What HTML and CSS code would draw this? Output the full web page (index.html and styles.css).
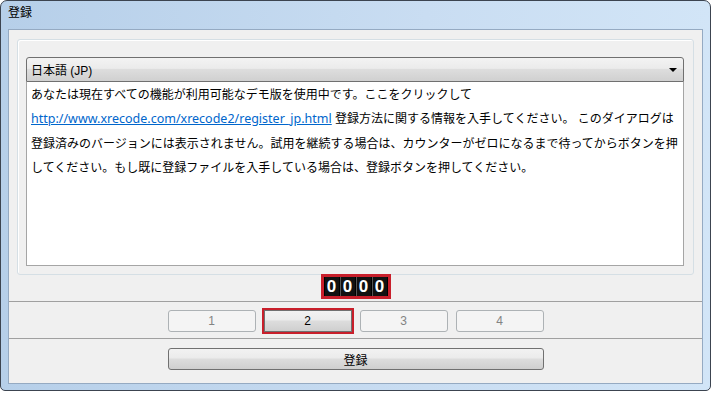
FILE: index.html
```html
<!DOCTYPE html>
<html lang="ja">
<head>
  <meta charset="UTF-8">
  <title>登録</title>
  <link rel="stylesheet" href="styles.css">
</head>
<body>
  <div class="window">
    <div class="titlebar">登録</div>
    <div class="client">
      <!-- 言語とメッセージ -->
      <div class="group">
        <div class="combo">
          <span>日本語 (JP)</span>
          <span class="arrow"></span>
        </div>
        <div class="memo">
          あなたは現在すべての機能が利用可能なデモ版を使用中です。ここをクリックして<br>
          <a href="#">http://www.xrecode.com/xrecode2/register_jp.html</a> 登録方法に関する情報を入手してください。 このダイアログは<br>
          登録済みのバージョンには表示されません。試用を継続する場合は、カウンターがゼロになるまで待ってからボタンを押<br>
          してください。もし既に登録ファイルを入手している場合は、登録ボタンを押してください。
        </div>
      </div>

      <!-- カウンター -->
      <div class="counter-row">
        <div class="counter">
          <span class="digit">0</span>
          <span class="digit">0</span>
          <span class="digit">0</span>
          <span class="digit">0</span>
        </div>
      </div>

      <div class="button-row">
        <button class="btn" disabled>1</button>
        <button class="btn marked">2</button>
        <button class="btn" disabled>3</button>
        <button class="btn" disabled>4</button>
      </div>

      <div class="register-row">
        <button class="btn wide">登録</button>
      </div>
    </div>
  </div>
</body>
</html>
```

FILE: styles.css
```css
body {
  margin: 0;
  background: #ffffff;
  font-family: "Liberation Sans", "Noto Sans CJK JP", sans-serif;
  font-size: 12px;
  color: #000;
}
.window {
  box-sizing: border-box;
  width: 711px;
  height: 391px;
  border: 1px solid #3c4450;
  border-radius: 7px 7px 5px 5px;
  background: linear-gradient(to right, #b6cfe9, #c9ddf2 60%, #d2e5f7);
  padding: 0 7px 6px 7px;
  display: flex;
  flex-direction: column;
}
.titlebar {
  height: 28px;
  line-height: 25px;
  flex-shrink: 0;
}
.client {
  flex: 1;
  background: #f0f0f0;
  border: 1px solid #95aac2;
  display: flex;
  flex-direction: column;
}
.group {
  margin: 9px 8px 0 8px;
  height: 236px;
  box-sizing: border-box;
  border: 1px solid #d5dfe5;
  border-radius: 3px;
  box-shadow: inset 1px 1px 0 #fff;
  padding: 17px 9px 8px 8px;
  display: flex;
  flex-direction: column;
}
.combo {
  height: 25px;
  box-sizing: border-box;
  border: 1px solid #707070;
  border-radius: 3px 3px 0 0;
  background: linear-gradient(#f3f3f3, #ebebeb 45%, #dddddd 50%, #d0d0d0);
  display: flex;
  align-items: center;
  justify-content: space-between;
  padding: 0 6px 0 4px;
}
.arrow {
  width: 0;
  height: 0;
  border-left: 4px solid transparent;
  border-right: 4px solid transparent;
  border-top: 4px solid #000;
}
.memo {
  flex: 1;
  background: #fff;
  border: 1px solid #a5a5a5;
  border-top: none;
  padding: 1px 4px 0 4px;
  line-height: 24.3px;
}
.memo a {
  color: #0066cc;
  font-family: "Noto Sans", sans-serif;
  font-size: 12.5px;
}
.counter-row {
  height: 27px;
  margin-top: -1px;
  display: flex;
  justify-content: center;
  border-bottom: 1px solid #a0a0a0;
}
.counter {
  height: 25px;
  box-sizing: border-box;
  border: 3px solid #c81f2b;
  background: #000;
  display: flex;
  gap: 1px;
  padding: 0 1px;
}
.digit {
  width: 14px;
  background: #111;
  border-left: 1px solid #555;
  color: #fff;
  font-weight: bold;
  font-size: 17px;
  line-height: 19px;
  text-align: center;
}
.digit:first-child {
  border-left: none;
}
.button-row {
  height: 37px;
  box-sizing: border-box;
  padding-top: 8px;
  display: flex;
  justify-content: center;
  gap: 8px;
  border-bottom: 1px solid #a0a0a0;
}
.register-row {
  padding-top: 9px;
  display: flex;
  justify-content: center;
}
.btn {
  width: 88px;
  height: 22px;
  box-sizing: border-box;
  border: 1px solid #707070;
  border-radius: 3px;
  background: linear-gradient(#f2f2f2, #ebebeb 45%, #dddddd 50%, #cfcfcf);
  font-family: "Liberation Sans", "Noto Sans CJK JP", sans-serif;
  font-size: 12px;
  color: #000;
  padding: 0;
}
.btn:disabled {
  background: #f4f4f4;
  border-color: #adb2b5;
  color: #838383;
}
.btn.marked {
  outline: 2px solid #c81f2b;
  outline-offset: 0;
  border-radius: 0;
}
.btn.wide {
  width: 376px;
}
```
